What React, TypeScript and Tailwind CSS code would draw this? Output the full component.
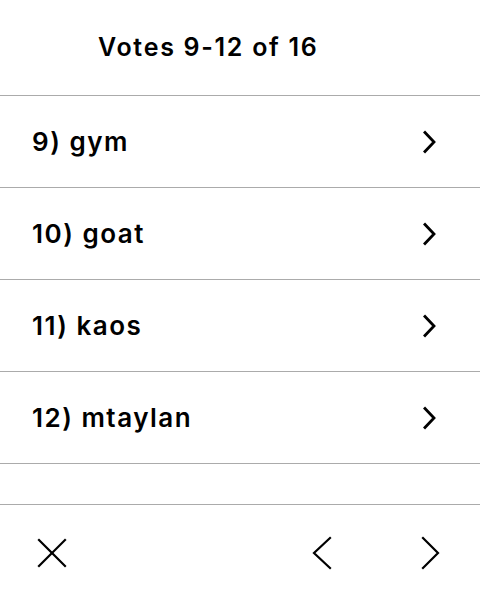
const rows = ['9) gym', '10) goat', '11) kaos', '12) mtaylan'];

function RowChevron() {
  return (
    <svg width="16" height="24" viewBox="0 0 16 24" fill="none" stroke="black" strokeWidth="2.8" strokeLinecap="square">
      <polyline points="4,2.5 13,12 4,21.5" />
    </svg>
  );
}

export default function App() {
  return (
    <div className="w-[480px] h-[600px] bg-white text-black flex flex-col font-['Inter','Liberation_Sans',sans-serif]">
      <div className="h-[96px] shrink-0 flex items-center pl-[98px] border-b border-[#ababab]">
        <h1 className="text-[25px] font-semibold leading-none tracking-[1.7px] -mt-[1px]">Votes 9-12 of 16</h1>
      </div>
      {rows.map((r) => (
        <div key={r} className="h-[92px] shrink-0 flex items-center justify-between pl-[32px] pr-[43px] border-b border-[#ababab]">
          <span className="text-[26px] font-semibold leading-none tracking-[1.5px]">{r}</span>
          <RowChevron />
        </div>
      ))}
      <div className="flex-1 border-b border-[#ababab]" />
      <div className="h-[95px] shrink-0 flex items-center px-[36px]">
        <svg width="32" height="32" viewBox="0 0 32 32" fill="none" stroke="black" strokeWidth="2.2" strokeLinecap="square">
          <line x1="3" y1="3" x2="29" y2="29" />
          <line x1="29" y1="3" x2="3" y2="29" />
        </svg>
        <div className="flex-1" />
        <svg width="24" height="36" viewBox="0 0 24 36" fill="none" stroke="black" strokeWidth="2.2" strokeLinecap="square">
          <polyline points="19,3 3,18 19,33" />
        </svg>
        <svg className="ml-[85px]" width="24" height="36" viewBox="0 0 24 36" fill="none" stroke="black" strokeWidth="2.2" strokeLinecap="square">
          <polyline points="3,3 18,18 3,33" />
        </svg>
      </div>
    </div>
  );
}
